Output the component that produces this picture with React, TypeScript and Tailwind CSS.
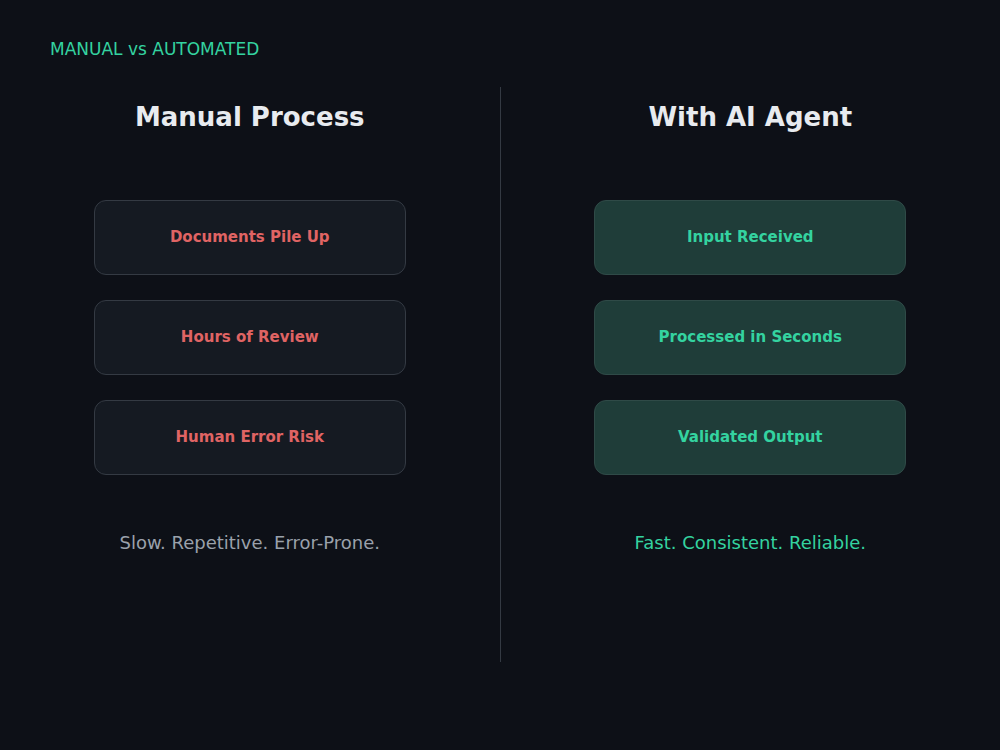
const manual = ["Documents Pile Up", "Hours of Review", "Human Error Risk"];
const ai = ["Input Received", "Processed in Seconds", "Validated Output"];

function Column({ title, items, tagline, ai }: { title: string; items: string[]; tagline: string; ai?: boolean }) {
  return (
    <div className="flex-1 flex flex-col items-center pt-[14px]">
      <h2 className="text-[26px] leading-[32px] font-bold text-[#e8ebef]">{title}</h2>
      <div className="mt-[67px] flex flex-col gap-[25px]">
        {items.map((t) => (
          <div
            key={t}
            className={`w-[312px] h-[75px] rounded-[12px] border flex items-center justify-center text-[15px] font-bold ${
              ai ? "bg-[#1f3d39] border-[#2f4a47] text-[#34d3a0]" : "bg-[#151a22] border-[#343a43] text-[#e06464]"
            }`}
          >
            {t}
          </div>
        ))}
      </div>
      <p className={`mt-[56px] text-[18px] leading-[24px] ${ai ? "text-[#34d3a0]" : "text-[#9aa1ab]"}`}>{tagline}</p>
    </div>
  );
}

export default function App() {
  return (
    <div className="w-[1000px] h-[750px] bg-[#0d1017] flex flex-col" style={{ fontFamily: '"DejaVu Sans", sans-serif' }}>
      <div className="pl-[50px] pt-[38px] text-[17px] leading-[22px] text-[#34d3a0]">MANUAL vs AUTOMATED</div>
      <div className="mt-[27px] flex h-[575px]">
        <Column title="Manual Process" items={manual} tagline="Slow. Repetitive. Error-Prone." />
        <div className="w-px bg-[#343a43]" />
        <Column title="With AI Agent" items={ai} tagline="Fast. Consistent. Reliable." ai />
      </div>
    </div>
  );
}
